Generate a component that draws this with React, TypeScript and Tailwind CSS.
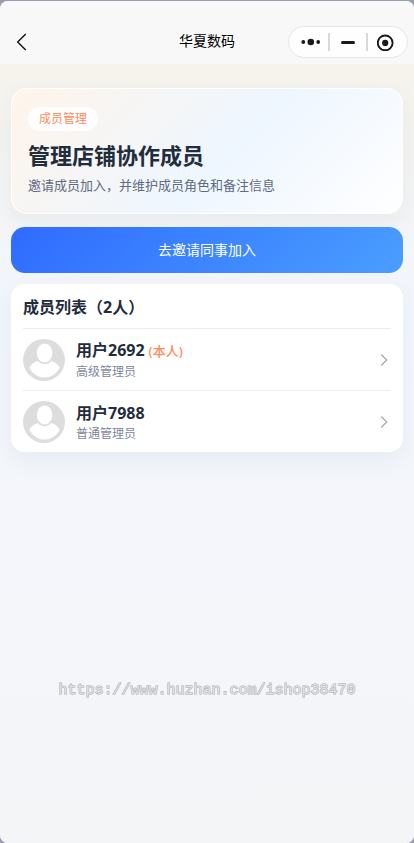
import React from 'react';

interface Member {
  id: number;
  name: string;
  role: string;
  isSelf?: boolean;
}

const members: Member[] = [
  { id: 1, name: '用户2692', role: '高级管理员', isSelf: true },
  { id: 2, name: '用户7988', role: '普通管理员' },
];

const Avatar: React.FC = () => (
  <svg viewBox="0 0 42 42" className="size-[42px] shrink-0" aria-hidden="true">
    <circle cx="21" cy="21" r="21" fill="#dddddd" />
    <path
      d="M6.3 28.8C8 25.4 11.2 23 15 21.9C18.6 26.2 24.6 26.2 28.2 21.9C32 23 35 25.4 36.7 28.8C33.4 35 27.8 38.6 21.5 38.6C15.2 38.6 9.6 35 6.3 28.8Z"
      fill="#fff"
    />
    <ellipse cx="21.6" cy="14" rx="8.4" ry="10.2" fill="#dddddd" />
    <ellipse cx="21.6" cy="14" rx="7.8" ry="9.4" fill="#fff" />
  </svg>
);

const NavBar: React.FC = () => (
  <header className="grid h-[63px] grid-cols-[1fr_auto_1fr] items-end rounded-t-lg bg-[#f8f8f8] px-1.5 pb-1.5">
    <button type="button" aria-label="返回" className="flex h-8 w-8 items-center pl-1.5">
      <svg viewBox="0 0 20 20" className="size-5" fill="none" stroke="#111" strokeWidth="1.4" aria-hidden="true">
        <path d="M13.7 1.9L5.7 9.9L13.7 17.9" />
      </svg>
    </button>
    <h1 className="h-8 text-sm leading-[30px] text-black">华夏数码</h1>
    <div className="flex h-8 w-[120px] items-center justify-self-end rounded-full border border-[#e7e7e7] bg-white/80">
      <button type="button" aria-label="更多" className="flex h-full flex-1 items-center justify-center pl-1">
        <svg viewBox="0 0 20 8" className="h-2 w-5" fill="#1a1a1a" aria-hidden="true">
          <circle cx="2.3" cy="4" r="1.9" />
          <circle cx="9.8" cy="4" r="3.3" />
          <circle cx="17.2" cy="4" r="1.9" />
        </svg>
      </button>
      <span className="h-[18px] w-0.5 bg-[#d8d8d8]" />
      <button type="button" aria-label="最小化" className="flex h-full w-9 items-center justify-center">
        <span className="h-[3px] w-3.5 rounded-full bg-[#1a1a1a]" />
      </button>
      <span className="h-[18px] w-0.5 bg-[#d8d8d8]" />
      <button type="button" aria-label="关闭" className="flex h-full flex-1 items-center justify-center pr-1">
        <svg viewBox="0 0 18 18" className="size-[18px]" aria-hidden="true">
          <circle cx="8.2" cy="9.9" r="7.4" fill="none" stroke="#1a1a1a" strokeWidth="1.9" />
          <circle cx="8.2" cy="9.9" r="3.1" fill="#1a1a1a" />
        </svg>
      </button>
    </div>
  </header>
);

const MemberRow: React.FC<{ member: Member }> = ({ member }) => (
  <li className="border-t border-[#ebecf0]">
    <button type="button" className="flex h-[61px] w-full items-center text-left">
      <Avatar />
      <span className="ml-[11px] flex flex-1 flex-col pt-0.5">
        <span className="text-base leading-[22px] font-bold text-[#1f2d3d]">
          {member.name}
          {member.isSelf && <span className="ml-1 text-[13px] font-medium text-[#ff8a5c]">(本人)</span>}
        </span>
        <span className="text-xs leading-5 text-[#7d8799]">{member.role}</span>
      </span>
      <svg viewBox="0 0 14 14" className="size-3.5" fill="none" stroke="#a3abba" strokeWidth="1.3" aria-hidden="true">
        <path d="M4.2 1.5L9.7 7L4.2 12.5" />
      </svg>
    </button>
  </li>
);

export default function App() {
  return (
    <div lang="zh-CN" className="min-h-screen bg-[#9a9eae] pt-px font-['Noto_Sans','Noto_Sans_CJK_SC',sans-serif]">
      <div className="relative flex min-h-[calc(100vh-1px)] flex-col rounded-lg bg-[#f4f5f8]">
        <NavBar />
        <main className="flex flex-1 flex-col rounded-b-lg bg-[linear-gradient(180deg,#f6f3ec_0px,#f2f6fc_220px,#f4f6fb_480px,#f4f5f7_100%)] px-[11px] pt-6">
          <section className="rounded-[16px] border border-white/90 bg-[linear-gradient(135deg,#fff5ea_0%,#eef6ff_55%,#ffffff_100%)] px-4 py-[18px] shadow-[0_8px_24px_rgba(31,45,61,0.06)]">
            <span className="flex h-6 w-fit items-center rounded-full bg-white/90 px-[11px] text-xs text-[#ff8a5c]">
              成员管理
            </span>
            <h2 className="mt-2 text-[22px] leading-8 font-bold text-[#1f2d3d]">管理店铺协作成员</h2>
            <p className="mt-1 text-[13px] leading-5 text-[#606b80]">邀请成员加入，并维护成员角色和备注信息</p>
          </section>

          <button
            type="button"
            className="mt-[13px] h-[46px] rounded-[14px] bg-[linear-gradient(135deg,#2f6bff,#4a9eff)] text-sm text-white"
          >
            去邀请同事加入
          </button>

          <section className="mt-[11px] rounded-[14px] bg-white px-3 pt-2.5 shadow-[0_8px_24px_rgba(31,45,61,0.06)]">
            <h2 className="mb-2 text-base leading-[26px] font-bold text-[#1f2d3d]">成员列表（2人）</h2>
            <ul>
              {members.map((member) => (
                <MemberRow key={member.id} member={member} />
              ))}
            </ul>
          </section>
        </main>

        {/* site watermark, floats over the page */}
        <div className="pointer-events-none absolute inset-x-0 bottom-[142px] text-center font-['Liberation_Mono',monospace] text-[15px] leading-5 text-[#e2e3e6] [paint-order:stroke_fill] [-webkit-text-stroke:1px_#a4a6a9]">
          https://www.huzhan.com/ishop38470
        </div>
      </div>
    </div>
  );
}
